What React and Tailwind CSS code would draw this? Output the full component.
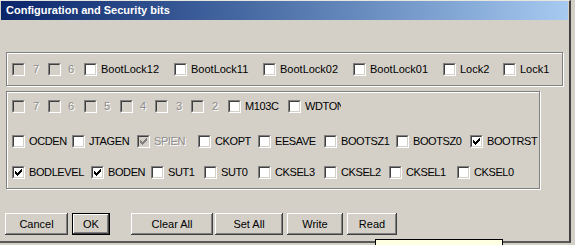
import React from "react";

const CHECK_PATH =
  "M6 0h1v1h-1z M5 1h2v1h-2z M0 2h1v1h-1z M4 2h3v1h-3z M0 3h2v1h-2z M3 3h3v1h-3z M0 4h5v1h-5z M1 5h3v1h-3z M2 6h1v1h-1z";

function Check({ checked, disabled }) {
  return (
    <div className="w-[13px] h-[13px] shrink-0 border border-t-[#808080] border-l-[#808080] border-b-white border-r-white">
      <div
        className={`w-full h-full border border-t-[#404040] border-l-[#404040] border-b-[#d4d0c8] border-r-[#d4d0c8] flex items-center justify-center ${
          disabled ? "bg-[#d4d0c8]" : "bg-white"
        }`}
      >
        {checked && (
          <svg width="7" height="7" viewBox="0 0 7 7" shapeRendering="crispEdges">
            <path d={CHECK_PATH} fill={disabled ? "#808080" : "#000"} />
          </svg>
        )}
      </div>
    </div>
  );
}

function Item({ w, label, checked, disabled, ml = "ml-[4px]", clip, tight }) {
  return (
    <div className={`flex items-center shrink-0 ${w} ${clip ? "overflow-hidden" : ""}`}>
      <Check checked={checked} disabled={disabled} />
      <span
        className={`${ml} text-[11px] leading-none whitespace-nowrap ${tight ? "tracking-[-0.4px]" : ""} ${
          disabled ? "text-[#8c8c8c] [text-shadow:1px_1px_0_#ffffff]" : "text-black"
        }`}
      >
        {label}
      </span>
    </div>
  );
}

const row1 = [
  { w: "w-[36px]", label: "7", disabled: true, ml: "ml-[8px]" },
  { w: "w-[36px]", label: "6", disabled: true, ml: "ml-[7px]" },
  { w: "w-[90px]", label: "BootLock12" },
  { w: "w-[89px]", label: "BootLock11" },
  { w: "w-[90px]", label: "BootLock02" },
  { w: "w-[90px]", label: "BootLock01" },
  { w: "w-[60px]", label: "Lock2" },
  { w: "w-[50px]", label: "Lock1" },
];

const row2 = [
  { w: "w-[36px]", label: "7", disabled: true, ml: "ml-[8px]" },
  { w: "w-[36px]", label: "6", disabled: true, ml: "ml-[7px]" },
  { w: "w-[36px]", label: "5", disabled: true, ml: "ml-[7px]" },
  { w: "w-[35px]", label: "4", disabled: true, ml: "ml-[7px]" },
  { w: "w-[36px]", label: "3", disabled: true, ml: "ml-[8px]" },
  { w: "w-[37px]", label: "2", disabled: true, ml: "ml-[8px]" },
  { w: "w-[60px]", label: "M103C", tight: true },
  { w: "w-[53px]", label: "WDTON", clip: true, tight: true },
];

const row3 = [
  { w: "w-[60px]", label: "OCDEN", tight: true },
  { w: "w-[65px]", label: "JTAGEN", tight: true },
  { w: "w-[61px]", label: "SPIEN", checked: true, disabled: true, tight: true },
  { w: "w-[60px]", label: "CKOPT", tight: true },
  { w: "w-[66px]", label: "EESAVE", tight: true },
  { w: "w-[72px]", label: "BOOTSZ1", tight: true },
  { w: "w-[74px]", label: "BOOTSZ0", tight: true },
  { w: "w-[60px]", label: "BOOTRST", checked: true, tight: true },
];

const row4 = [
  { w: "w-[79px]", label: "BODLEVEL", checked: true, tight: true },
  { w: "w-[60px]", label: "BODEN", checked: true, tight: true },
  { w: "w-[53px]", label: "SUT1", tight: true },
  { w: "w-[54px]", label: "SUT0", tight: true },
  { w: "w-[66px]", label: "CKSEL3", tight: true },
  { w: "w-[65px]", label: "CKSEL2", tight: true },
  { w: "w-[68px]", label: "CKSEL1", tight: true },
  { w: "w-[60px]", label: "CKSEL0", tight: true },
];

function Row({ items, className = "" }) {
  return (
    <div className={`flex items-center h-[13px] ${className}`}>
      {items.map((it, i) => (
        <Item key={i} {...it} />
      ))}
    </div>
  );
}

function Button({ children, w, className = "", def }) {
  return (
    <div
      className={`${w} h-[22px] flex items-center justify-center text-[11px] text-black bg-[#d4d0c8] ${
        def
          ? "border border-black shadow-[inset_-1px_-1px_#404040,inset_1px_1px_#ffffff,inset_-2px_-2px_#808080]"
          : "shadow-[inset_-1px_-1px_#404040,inset_1px_1px_#ffffff,inset_-2px_-2px_#808080]"
      } ${className}`}
    >
      {children}
    </div>
  );
}

export default function App() {
  return (
    <div
      className="relative w-[575px] h-[245px] overflow-hidden bg-[#d4d0c8]"
      style={{ fontFamily: '"Liberation Sans", Arial, sans-serif' }}
    >
      <div className="w-[571px] h-[243px] bg-[#d4d0c8] border-t border-t-[#e8e6e0] border-r-2 border-r-[#404040] border-b-2 border-b-[#5a5a5a] flex flex-col">
        <div className="h-[19px] ml-[1px] mr-[1px] flex items-center pl-[5px] bg-gradient-to-r from-[#0a246a] to-[#a6caf0]">
          <span className="text-white font-bold text-[11px] leading-none">
            Configuration and Security bits
          </span>
        </div>

        <div className="ml-[6px] mt-[32px] w-[557px] h-[34px] border border-[#808080] shadow-[inset_1px_1px_0_#ffffff,1px_1px_0_#ffffff] pl-[5px] pt-[10px]">
          <Row items={row1} />
        </div>

        <div className="ml-[6px] mt-[5px] w-[534px] h-[98px] border border-[#808080] shadow-[inset_1px_1px_0_#ffffff,1px_1px_0_#ffffff] pl-[5px] pt-[8px]">
          <Row items={row2} />
          <Row items={row3} className="mt-[22px]" />
          <Row items={row4} className="mt-[18px]" />
        </div>

        <div className="flex mt-[24px] ml-[5px]">
          <Button w="w-[63px]">Cancel</Button>
          <Button w="w-[38px]" className="ml-[4px]" def>
            OK
          </Button>
          <Button w="w-[82px]" className="ml-[21px]">
            Clear All
          </Button>
          <Button w="w-[68px]" className="ml-[2px]">
            Set All
          </Button>
          <Button w="w-[56px]" className="ml-[4px]">
            Write
          </Button>
          <Button w="w-[50px]" className="ml-[4px]">
            Read
          </Button>
        </div>
      </div>

      <div className="absolute left-[375px] top-[239px] w-[128px] h-[20px] bg-[#ffffe1] border border-black text-[11px] text-black pl-[12px] pt-[4px] whitespace-nowrap">
        Uses fuse settings
      </div>
    </div>
  );
}
